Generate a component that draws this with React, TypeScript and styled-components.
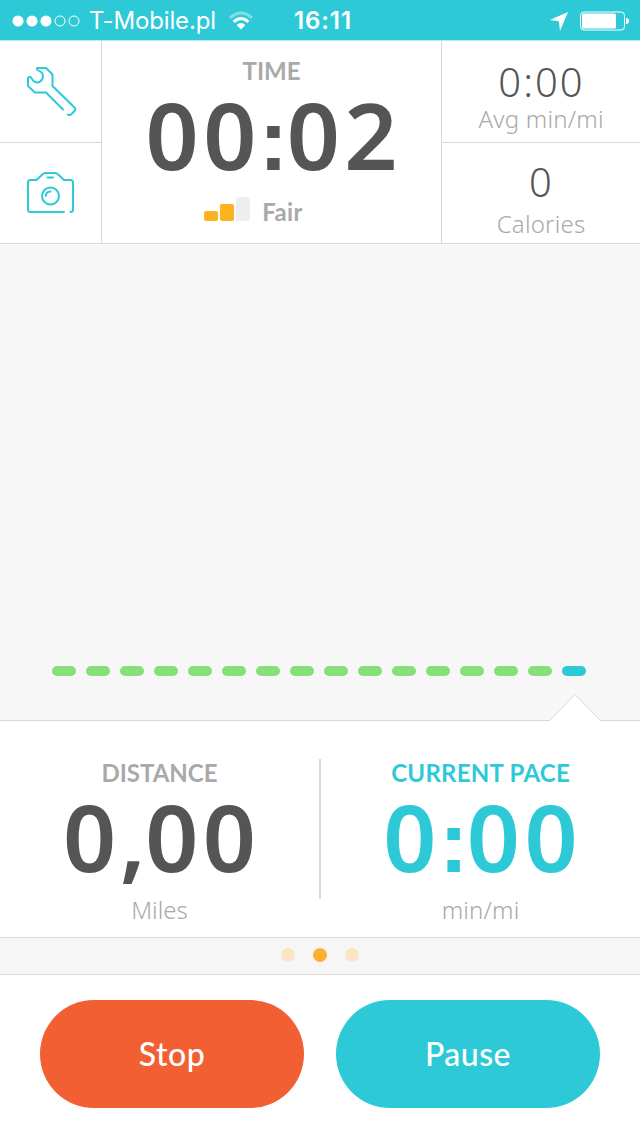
import React from 'react';
import styled, { createGlobalStyle } from 'styled-components';

const teal = '#2ec9d7';
const line = '#d5d9dc';
const grey = '#a9a9a9';
const dark = '#555555';

const GlobalStyle = createGlobalStyle`
  * { box-sizing: border-box; }
  body { margin: 0; background: #fff; font-family: Lato, "Open Sans", sans-serif; }
`;

const Screen = styled.main`
  width: 640px;
  height: 1136px;
  display: flex;
  flex-direction: column;
  background: #fff;
  overflow: hidden;
`;

const StatusBar = styled.header`
  height: 41px;
  flex: none;
  display: grid;
  grid-template-columns: 1fr 60px 1fr;
  background: ${teal};
  border-bottom: 1px solid #b5e8ec;
  color: #fff;
  font: 400 24px/40px Inter, sans-serif;
`;

const StatusSide = styled.div<{ $end?: boolean }>`
  display: flex;
  align-items: center;
  justify-content: ${p => (p.$end ? 'flex-end' : 'flex-start')};
  padding: ${p => (p.$end ? '0 11px 0 0' : '0 0 0 12px')};
  height: 41px;
  svg { display: block; flex: none; }
`;

const Carrier = styled.span`
  margin: 0 12px 0 8px;
  width: 128px;
  letter-spacing: -0.15px;
  white-space: nowrap;
`;

const Clock = styled.div`
  font-weight: 600;
  line-height: 41px;
  text-align: center;
  white-space: nowrap;
  letter-spacing: 0.9px;
  padding-left: 4px;
`;

const Summary = styled.section`
  height: 203px;
  flex: none;
  display: grid;
  grid-template-columns: 102px 340px 198px;
  border-bottom: 1px solid ${line};
`;

const Column = styled.div`
  display: grid;
  grid-template-rows: 102px 100px;
  border-right: 1px solid ${line};
  &:last-child { border-right: 0; }
`;

const Tool = styled.button`
  border: 0;
  padding: 0;
  background: none;
  display: block;
  &:first-child { border-bottom: 1px solid ${line}; }
  svg { display: block; }
`;

const TimeCell = styled.div`
  display: flex;
  flex-direction: column;
  align-items: center;
  padding-top: 15px;
  border-right: 1px solid ${line};
`;

const Caption = styled.div<{ $color?: string; $track?: number }>`
  font-size: 24px;
  font-weight: 700;
  line-height: 30px;
  color: ${p => p.$color ?? grey};
  letter-spacing: ${p => p.$track ?? 0}px;
  margin-right: ${p => -(p.$track ?? 0)}px;
  white-space: nowrap;
`;

const BigNumber = styled.div<{ $color?: string }>`
  font-family: "Noto Sans", sans-serif;
  font-size: 93px;
  font-weight: 650;
  line-height: 80px;
  height: 80px;
  color: ${p => p.$color ?? dark};
  letter-spacing: 4.5px;
  margin: 8px -4.5px 0 0;
  white-space: nowrap;
`;

const Colon = styled.span`
  font-family: "Liberation Sans", sans-serif;
  font-size: 88px;
  line-height: 1px;
  margin-left: -2px;
  letter-spacing: -1.5px;
`;

const Comma = styled.span`
  margin-left: -1px;
  letter-spacing: -0.5px;
`;

const Signal = styled.div`
  display: flex;
  align-items: flex-end;
  gap: 2px;
  height: 30px;
  margin: 22px 36px 0 0;
`;

const SignalBar = styled.i<{ $h: number; $on?: boolean }>`
  width: 14px;
  height: ${p => p.$h}px;
  margin-bottom: 5px;
  border-radius: 2px;
  background: ${p => (p.$on ? '#fdb31f' : '#eeeeee')};
`;

const SignalText = styled(Caption)`
  margin: 0 0 -1px 10px;
`;

const Stat = styled.div<{ $pad: number; $gap: number }>`
  display: flex;
  flex-direction: column;
  align-items: center;
  padding-top: ${p => p.$pad}px;
  gap: ${p => p.$gap}px;
  &:first-child { border-bottom: 1px solid ${line}; }
`;

const StatValue = styled.div`
  font-family: "Noto Sans", sans-serif;
  font-size: 40px;
  font-weight: 300;
  line-height: 40px;
  color: ${dark};
  letter-spacing: 2px;
  margin-right: -1px;
`;

const Unit = styled.div<{ $track?: number }>`
  font-family: "Noto Sans", sans-serif;
  font-size: 24px;
  font-weight: 300;
  line-height: 30px;
  color: ${grey};
  letter-spacing: ${p => p.$track ?? 0}px;
  margin-right: ${p => -(p.$track ?? 0)}px;
  white-space: nowrap;
`;

const Chart = styled.section`
  position: relative;
  height: 477px;
  flex: none;
  display: flex;
  align-items: flex-end;
  gap: 10px;
  padding: 0 0 44px 52px;
  background: #f7f7f7;
  border-bottom: 1px solid ${line};
`;

const Dash = styled.i<{ $current?: boolean }>`
  width: 24px;
  height: 10px;
  border-radius: 5px;
  background: ${p => (p.$current ? teal : '#84e077')};
`;

const Pointer = styled.svg`
  position: absolute;
  left: 548px;
  bottom: -1px;
`;

const Metrics = styled.section`
  height: 217px;
  flex: none;
  display: grid;
  grid-template-columns: 319px 2px 319px;
  border-bottom: 1px solid ${line};
`;

const Metric = styled.div`
  display: flex;
  flex-direction: column;
  align-items: center;
  padding-top: 37px;
  ${Unit} { margin-top: 19px; }
`;

const Rule = styled.div`
  margin-top: 38px;
  height: 140px;
  background: ${line};
`;

const Pager = styled.nav`
  height: 37px;
  flex: none;
  display: flex;
  align-items: center;
  justify-content: center;
  gap: 18px;
  padding-bottom: 2px;
  background: #f6f6f6;
  border-bottom: 1px solid ${line};
`;

const Dot = styled.i<{ $active?: boolean }>`
  width: 14px;
  height: 14px;
  border-radius: 50%;
  background: ${p => (p.$active ? '#fdb12e' : '#fce5c5')};
`;

const Actions = styled.footer`
  display: flex;
  gap: 32px;
  padding: 25px 40px 0;
`;

const Action = styled.button<{ $bg: string }>`
  width: 264px;
  height: 108px;
  border: 0;
  border-radius: 54px;
  padding: 0;
  background: ${p => p.$bg};
  color: #fff;
  font: 500 32px/40px Lato, sans-serif;
  letter-spacing: 0.5px;
`;

export default function App() {
  return (
    <>
      <GlobalStyle />
      <Screen>
        <StatusBar>
          <StatusSide>
            <svg width="69" height="12" viewBox="0 0 69 12" fill="none" stroke="#fff">
              {[6, 20, 34].map(x => <circle key={x} cx={x} cy="6" r="5.5" fill="#fff" stroke="none" />)}
              {[48, 62].map(x => <circle key={x} cx={x} cy="6" r="5" />)}
            </svg>
            <Carrier>T-Mobile.pl</Carrier>
            <svg width="24" height="20" viewBox="0 0 24 20" fill="none" stroke="#fff" strokeWidth="3">
              <path d="M1 6.8Q12-2.8 23 6.8" strokeOpacity=".42" />
              <path d="M4.7 10.8Q12 4.2 19.3 10.8" />
              <path d="M7.6 14Q12 10.2 16.4 14L12 18.6Z" fill="#fff" stroke="none" />
            </svg>
          </StatusSide>
          <Clock>16:11</Clock>
          <StatusSide $end>
            <svg width="80" height="20" viewBox="0 0 80 20" fill="#fff">
              <path d="M19 1L11 20L9.8 10.3L.8 9Z" />
              <rect x="31.500" y="1" width="44" height="18" rx="3.5" fill="none" stroke="#fff" />
              <rect x="33" y="2.500" width="34" height="15" rx="1.5" />
              <path d="M77 7Q80 7.300 80 10T77 13.300Z" />
            </svg>
          </StatusSide>
        </StatusBar>

        <Summary>
          <Column>
            <Tool aria-label="Settings">
              <svg width="101" height="101" viewBox="0 41 101 101" fill="none" stroke={teal} strokeWidth="2" strokeLinecap="round" strokeLinejoin="round">
                <path d="M63 109.500L46 92.500H35L28 86V78Q29.500 75.500 31.500 78C32.500 81 36 83.500 39.500 82C43.500 80 44 74.500 41 72L37.500 70Q36 68 38 68H46L52.500 74.500V86L75 108Q76 109 75 110.500L71 114.500Q69 115.500 67.800 114.500" />
              </svg>
            </Tool>
            <Tool aria-label="Camera">
              <svg width="101" height="100" viewBox="0 143 101 100" fill="none" stroke={teal} strokeWidth="2" strokeLinecap="round" strokeLinejoin="round">
                <path d="M64 212H30.500Q28 212 28 209.500V182.500Q28 180 30.500 180H36.500L42 174.800Q43.500 173 46 173H54.500Q57 173 58.500 174.800L64 180H70.500Q73 180 73 182.500V209.500Q73 212 70.500 212" />
                <path d="M47.500 177.500H53" />
                <circle cx="50.500" cy="196" r="8.500" />
                <path d="M45.800 196Q46 191.800 50.500 191.500" />
              </svg>
            </Tool>
          </Column>
          <TimeCell>
            <Caption>TIME</Caption>
            <BigNumber>00<Colon>:</Colon>02</BigNumber>
            <Signal>
              <SignalBar $h={10} $on />
              <SignalBar $h={17} $on />
              <SignalBar $h={24} />
              <SignalText $track={0.3}>Fair</SignalText>
            </Signal>
          </TimeCell>
          <Column>
            <Stat $pad={21} $gap={2}>
              <StatValue>0:00</StatValue>
              <Unit $track={0.2}>Avg min/mi</Unit>
            </Stat>
            <Stat $pad={19} $gap={7}>
              <StatValue>0</StatValue>
              <Unit $track={0.2}>Calories</Unit>
            </Stat>
          </Column>
        </Summary>

        <Chart>
          {Array.from({ length: 16 }, (_, i) => <Dash key={i} $current={i === 15} />)}
          <Pointer width="54" height="28" viewBox="0 0 54 28">
            <path d="M2 28V27L27 1.500L52 27V28Z" fill="#fff" />
            <path d="M2 27L27 1.500L52 27" fill="none" stroke={line} />
          </Pointer>
        </Chart>

        <Metrics>
          <Metric>
            <Caption>DISTANCE</Caption>
            <BigNumber>0<Comma>,</Comma>00</BigNumber>
            <Unit>Miles</Unit>
          </Metric>
          <Rule />
          <Metric>
            <Caption $color={teal} $track={0.25}>CURRENT PACE</Caption>
            <BigNumber $color={teal}>0<Colon>:</Colon>00</BigNumber>
            <Unit $track={0.2}>min/mi</Unit>
          </Metric>
        </Metrics>

        <Pager>
          <Dot />
          <Dot $active />
          <Dot />
        </Pager>

        <Actions>
          <Action $bg="#f15f33">Stop</Action>
          <Action $bg={teal}>Pause</Action>
        </Actions>
      </Screen>
    </>
  );
}
